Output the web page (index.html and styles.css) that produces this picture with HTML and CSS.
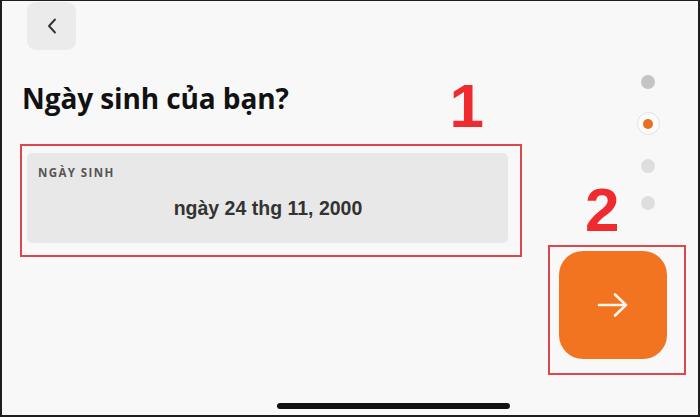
FILE: index.html
```html
<!DOCTYPE html>
<html lang="vi">
<head>
    <meta charset="UTF-8">
    <meta name="viewport" content="width=device-width, initial-scale=1.0">
    <title>Ngày sinh</title>
    <link rel="stylesheet" href="styles.css">
</head>
<body>
  <div class="screen">
    <div class="main">
      <button class="back">
        <svg width="10" height="16" viewBox="0 0 10 16"><path d="M8 1.5 L2 8 L8 14.5" fill="none" stroke="#333" stroke-width="1.9" stroke-linecap="round" stroke-linejoin="round"/></svg>
      </button>
      <h1 class="title">Ngày sinh của bạn?</h1>
      <div class="mark mark_field">
        <div class="field">
          <span class="label">NGÀY SINH</span>
          <span class="value">ngày 24 thg 11, 2000</span>
        </div>
        <span class="num num1">1</span>
      </div>
    </div>
    <div class="side">
      <ul class="dots">
        <li class="dot"></li>
        <li class="dot on"><span></span></li>
        <li class="dot light"></li>
        <li class="dot light"></li>
      </ul>
      <div class="mark mark_next">
        <span class="num num2">2</span>
        <button class="next">
          <svg width="34" height="26" viewBox="0 0 34 26"><path d="M3 13 H30 M19 2.5 L30 13 L19 23.5" fill="none" stroke="#fff6ec" stroke-width="2.6" stroke-linecap="round" stroke-linejoin="round"/></svg>
        </button>
      </div>
    </div>
    <div class="home"></div>
  </div>
</body>
</html>
```

FILE: styles.css
```css
*{margin:0;padding:0;box-sizing:border-box;}
body{background:#f8f8f8;font-family:"Open Sans","Noto Sans",sans-serif;}
.screen{position:relative;width:700px;height:417px;background:#f8f8f8;border:solid #1e1e1e;border-width:1px 2px 2px 2px;display:flex;overflow:hidden;}

.main{width:520px;padding-left:18px;display:flex;flex-direction:column;}
.back{width:49px;height:48px;margin:1px 0 0 7px;border:0;border-radius:9px;background:#ebebeb;display:flex;justify-content:center;align-items:center;}
.title{margin-top:31px;padding-left:2px;font-size:28px;font-weight:700;color:#111;line-height:34px;letter-spacing:-0.1px;}

.mark{position:relative;border:2px solid #d8484c;}
.mark_field{width:502px;height:113px;margin-top:29px;padding:7px 12px 12px 5px;}
.field{height:100%;background:#e8e8e8;border-radius:5px;padding:12px 10px 0 11px;display:flex;flex-direction:column;}
.label{font-size:11.5px;font-weight:700;letter-spacing:1.4px;color:#555;line-height:15px;}
.value{margin-top:17px;text-align:center;font-family:"Liberation Sans",Arial,sans-serif;font-size:19.5px;font-weight:700;color:#333;}

.num{position:absolute;font-family:"Liberation Sans",Arial,sans-serif;font-weight:700;font-size:62px;line-height:1;color:#ef2b2f;}
.num1{right:36px;top:-71px;}
.num2{left:35px;top:-68px;}

.side{margin-left:26px;width:138px;display:flex;flex-direction:column;}
.dots{list-style:none;margin:74px 0 0 88px;width:24px;display:flex;flex-direction:column;align-items:center;}
.dot{width:14px;height:14px;border-radius:50%;background:#c4c4c4;}
.dot.on{width:23px;height:23px;margin-top:23px;background:#fbfbfb;border:1px solid #e2e2e2;display:flex;justify-content:center;align-items:center;}
.dot.on span{width:10px;height:10px;border-radius:50%;background:#e86f22;}
.dot.light{background:#dedede;margin-top:24px;}
.dot.light:last-child{margin-top:23px;}
.mark_next{width:138px;height:130px;margin-top:35px;padding:4px 0 0 9px;}
.next{width:108px;height:108px;border:0;border-radius:24px;background:#f37420;display:flex;justify-content:center;align-items:center;}

.home{position:absolute;left:275px;bottom:6px;width:233px;height:6px;border-radius:3px;background:#111;}
```
